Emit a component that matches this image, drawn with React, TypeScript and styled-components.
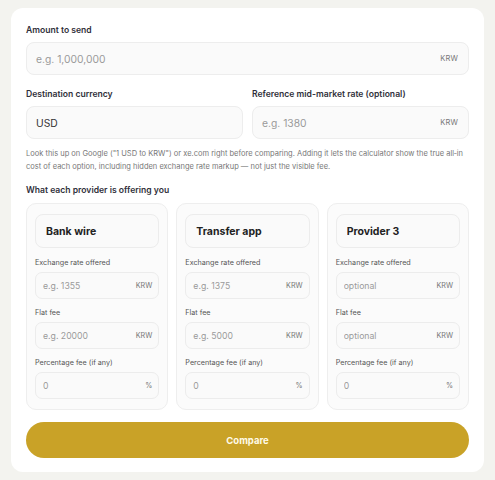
import styled, { createGlobalStyle } from "styled-components";

const GlobalStyle = createGlobalStyle`
  * { box-sizing: border-box; }
  body {
    margin: 0;
    background: #f3f3ef;
    font-family: Inter, "Noto Sans", sans-serif;
    color: #222;
  }
`;

type Provider = {
  name: string;
  rate: string;
  fee: string;
};

const providers: Provider[] = [
  { name: "Bank wire", rate: "e.g. 1355", fee: "e.g. 20000" },
  { name: "Transfer app", rate: "e.g. 1375", fee: "e.g. 5000" },
  { name: "Provider 3", rate: "optional", fee: "optional" },
];

export default function App() {
  return (
    <>
      <GlobalStyle />
      <Page>
        <Card>
          <Field>
            <Label>Amount to send</Label>
            <InputBox>
              <Input placeholder="e.g. 1,000,000" />
              <Suffix>KRW</Suffix>
            </InputBox>
          </Field>

          <TwoCols>
            <Field>
              <Label>Destination currency</Label>
              <InputBox>
                <Input defaultValue="USD" />
              </InputBox>
            </Field>
            <Field>
              <Label>Reference mid-market rate (optional)</Label>
              <InputBox>
                <Input placeholder="e.g. 1380" />
                <Suffix>KRW</Suffix>
              </InputBox>
            </Field>
          </TwoCols>

          <Help>
            Look this up on Google ("1 USD to KRW") or xe.com right before comparing. Adding it lets
            the calculator show the true all&#8209;in cost of each option, including hidden exchange
            rate markup — not just the visible fee.
          </Help>

          <SectionTitle>What each provider is offering you</SectionTitle>

          <ProviderGrid>
            {providers.map((p) => (
              <ProviderCard key={p.name}>
                <NameInput defaultValue={p.name} />
                <SmallField>
                  <SmallLabel>Exchange rate offered</SmallLabel>
                  <SmallBox>
                    <SmallInput placeholder={p.rate} />
                    <SmallSuffix>KRW</SmallSuffix>
                  </SmallBox>
                </SmallField>
                <SmallField>
                  <SmallLabel>Flat fee</SmallLabel>
                  <SmallBox>
                    <SmallInput placeholder={p.fee} />
                    <SmallSuffix>KRW</SmallSuffix>
                  </SmallBox>
                </SmallField>
                <SmallField>
                  <SmallLabel>Percentage fee (if any)</SmallLabel>
                  <SmallBox>
                    <SmallInput placeholder="0" />
                    <SmallSuffix>%</SmallSuffix>
                  </SmallBox>
                </SmallField>
              </ProviderCard>
            ))}
          </ProviderGrid>

          <CompareButton>Compare</CompareButton>
        </Card>
      </Page>
    </>
  );
}

const Page = styled.div`
  padding: 8px 11px 8px 11px;
`;

const Card = styled.div`
  background: #ffffff;
  border-radius: 12px;
  padding: 16px 15px 14px;
  display: flex;
  flex-direction: column;
`;

const Field = styled.div`
  display: flex;
  flex-direction: column;
  min-width: 0;
`;

const Label = styled.label`
  font-size: 8.6px;
  line-height: 12px;
  font-weight: 600;
  color: #2f2f3a;
  margin-bottom: 6px;
`;

const InputBox = styled.div`
  height: 33px;
  display: flex;
  align-items: center;
  background: #fafafa;
  border: 1px solid #ededed;
  border-radius: 8px;
  padding: 0 10px 0 9px;
`;

const Input = styled.input`
  flex: 1;
  min-width: 0;
  width: 0;
  border: none;
  background: transparent;
  outline: none;
  font-family: inherit;
  font-size: 10.3px;
  color: #333;
  padding: 0;

  &::placeholder {
    color: #9a9a9a;
  }
`;

const Suffix = styled.span`
  font-size: 7.5px;
  color: #777;
  letter-spacing: 0.2px;
`;

const TwoCols = styled.div`
  display: grid;
  grid-template-columns: minmax(0, 1fr) minmax(0, 1fr);
  gap: 9px;
  margin-top: 13px;
`;

const Help = styled.p`
  margin: 8px 0 0;
  font-size: 7.5px;
  line-height: 13px;
  color: #777;
`;

const SectionTitle = styled.h3`
  margin: 11px 0 7px;
  font-size: 8.6px;
  line-height: 12px;
  font-weight: 600;
  color: #2f2f3a;
`;

const ProviderGrid = styled.div`
  display: grid;
  grid-template-columns: repeat(3, minmax(0, 1fr));
  gap: 8px;
`;

const ProviderCard = styled.div`
  min-width: 0;
  background: #fbfbfb;
  border: 1px solid #eeeeee;
  border-radius: 10px;
  padding: 10px 8px 10px;
  display: flex;
  flex-direction: column;
  gap: 9px;
`;

const NameInput = styled.input`
  height: 34px;
  width: 100%;
  min-width: 0;
  border: 1px solid #ececec;
  border-radius: 8px;
  background: #fafafa;
  outline: none;
  padding: 0 10px;
  font-family: inherit;
  font-size: 10.5px;
  font-weight: 700;
  color: #222;
  margin-bottom: 1px;
`;

const SmallField = styled.div`
  display: flex;
  flex-direction: column;
`;

const SmallLabel = styled.label`
  font-size: 7.2px;
  line-height: 10px;
  color: #555;
  margin-bottom: 4px;
`;

const SmallBox = styled.div`
  height: 27px;
  display: flex;
  align-items: center;
  background: #fafafa;
  border: 1px solid #ececec;
  border-radius: 7px;
  padding: 0 6px 0 7px;
`;

const SmallInput = styled.input`
  flex: 1;
  min-width: 0;
  width: 0;
  border: none;
  background: transparent;
  outline: none;
  font-family: inherit;
  font-size: 8.7px;
  color: #333;
  padding: 0;

  &::placeholder {
    color: #9a9a9a;
  }
`;

const SmallSuffix = styled.span`
  font-size: 7.2px;
  color: #777;
`;

const CompareButton = styled.button`
  margin-top: 12px;
  height: 36px;
  border: none;
  border-radius: 18px;
  background: #c9a227;
  color: #fffbe8;
  font-family: inherit;
  font-size: 9.5px;
  font-weight: 700;
  cursor: pointer;
`;
